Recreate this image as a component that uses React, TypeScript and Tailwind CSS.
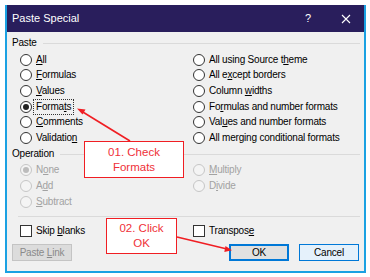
import React from "react";

const font = { fontFamily: '"Liberation Sans", Arial, sans-serif' };

function U({ t, i }: { t: string; i: number }) {
  return (
    <>
      {t.slice(0, i)}
      <span className="underline underline-offset-[1px]">{t[i]}</span>
      {t.slice(i + 1)}
    </>
  );
}

function Radio({
  label,
  u,
  checked,
  disabled,
  focus,
}: {
  label: string;
  u: number;
  checked?: boolean;
  disabled?: boolean;
  focus?: boolean;
}) {
  return (
    <div className="flex items-center h-full">
      <div
        className={
          "w-[12px] h-[12px] rounded-full border flex items-center justify-center shrink-0 " +
          (disabled ? "border-[#c6c6c6] bg-[#f4f4f4]" : "border-[#333333] bg-white")
        }
      >
        {checked && (
          <div
            className={
              "w-[6px] h-[6px] rounded-full " + (disabled ? "bg-[#bcbcbc]" : "bg-[#222222]")
            }
          />
        )}
      </div>
      <span
        className={
          "ml-[4px] leading-none whitespace-nowrap " +
          (disabled ? "text-[#a2a2a2]" : "text-black") +
          (focus ? " outline-1 outline-dotted outline-[#333333] outline-offset-[2px]" : "")
        }
      >
        <U t={label} i={u} />
      </span>
    </div>
  );
}

function Check({ label, u }: { label: string; u: number }) {
  return (
    <div className="flex items-center h-full">
      <div className="w-[12px] h-[12px] border border-[#333333] bg-white shrink-0" />
      <span className="ml-[4px] leading-none whitespace-nowrap text-black">
        <U t={label} i={u} />
      </span>
    </div>
  );
}

function Header({ label }: { label: string }) {
  return (
    <div className="flex items-center h-[14px] ml-[5px] mr-[4px]">
      <span className="text-black leading-none">{label}</span>
      <div className="flex-1 h-px bg-[#dadada] ml-[6px]" />
    </div>
  );
}

export default function App() {
  const paste: [string, number, boolean?, boolean?][] = [
    ["All", 0],
    ["All using Source theme", 18],
    ["Formulas", 0],
    ["All except borders", 5],
    ["Values", 0],
    ["Column widths", 7],
    ["Formats", 5, true, true],
    ["Formulas and number formats", 2],
    ["Comments", 0],
    ["Values and number formats", 3],
    ["Validation", 9],
    ["All merging conditional formats", 10],
  ];
  return (
    <div
      className="relative w-[370px] h-[277px] bg-white pt-[5px] pl-[5px] text-[10px] tracking-[-0.2px]"
      style={font}
    >
      <div className="w-[361px] h-[268px] flex flex-col border-x-2 border-b-2 border-[#1ba1e2]">
        {/* Title bar */}
        <div className="h-[27px] bg-[#291e5c] flex items-center text-white shrink-0">
          <span className="ml-[5px] text-[11px] tracking-normal">Paste Special</span>
          <span className="ml-auto w-[20px] text-center text-[11px]">?</span>
          <span className="ml-[18px] mr-[8px] w-[20px] flex justify-center">
            <svg width="10" height="10" viewBox="0 0 10 10">
              <path d="M1 1 L9 9 M9 1 L1 9" stroke="white" strokeWidth="1.1" />
            </svg>
          </span>
        </div>
        {/* Body */}
        <div className="flex-1 bg-[#f0f0f0] flex flex-col">
          <div className="mt-[4px]">
            <Header label="Paste" />
          </div>
          <div className="mt-[2px] ml-[13px] grid grid-cols-[173px_1fr] auto-rows-[15.6px]">
            {paste.map(([l, u, c, f]) => (
              <Radio key={l} label={l} u={u} checked={c} focus={f} />
            ))}
          </div>
          <div className="mt-[1.5px]">
            <Header label="Operation" />
          </div>
          <div className="mt-[1px] ml-[13px] grid grid-cols-[173px_1fr] auto-rows-[16px]">
            <Radio label="None" u={1} checked disabled />
            <Radio label="Multiply" u={0} disabled />
            <Radio label="Add" u={1} disabled />
            <Radio label="Divide" u={1} disabled />
            <Radio label="Subtract" u={0} disabled />
            <div />
          </div>
          <div className="mt-[6px] ml-[11px] mr-[4px] h-px bg-[#dadada]" />
          <div className="mt-[7px] ml-[13px] grid grid-cols-[173px_1fr] h-[14px]">
            <Check label="Skip blanks" u={5} />
            <Check label="Transpose" u={8} />
          </div>
          <div className="mt-[6px] flex items-center ml-[5px]">
            <div className="w-[60px] h-[17px] border border-[#c4c4c4] bg-[#dcdcdc] text-[#8a8a8a] flex items-center justify-center">
              <span>
                Paste <U t="Link" i={0} />
              </span>
            </div>
            <div className="ml-[157px] w-[60px] h-[17px] border-2 border-[#0078d7] bg-[#e1e1e1] text-black flex items-center justify-center">
              OK
            </div>
            <div className="ml-[10px] w-[60px] h-[17px] border border-[#0078d7] bg-[#e5f1fb] text-black flex items-center justify-center">
              Cancel
            </div>
          </div>
        </div>
      </div>

      {/* Annotations */}
      <div className="absolute left-[84px] top-[141px] w-[100px] h-[37px] border-[1.5px] border-[#f01e23] bg-white flex flex-col items-center justify-center text-[#ef3038] text-[11.5px] leading-[15px] tracking-normal">
        <span>01. Check</span>
        <span>Formats</span>
      </div>
      <div className="absolute left-[106px] top-[218px] w-[71px] h-[36px] border-[1.5px] border-[#f01e23] bg-white flex flex-col items-center justify-center text-[#ef3038] text-[11.5px] leading-[15px] tracking-normal">
        <span>02. Click</span>
        <span>OK</span>
      </div>
      <svg className="absolute left-0 top-0 pointer-events-none" width="370" height="277">
        <line x1="130" y1="141" x2="82" y2="111.5" stroke="#f01e23" strokeWidth="1.6" />
        <polygon points="77,108.5 85.5,109.5 82.5,114.5" fill="#f01e23" />
        <line x1="177" y1="237" x2="227" y2="249" stroke="#f01e23" strokeWidth="1.6" />
        <polygon points="232,250.2 225.5,246 224.3,252" fill="#f01e23" />
      </svg>
    </div>
  );
}
